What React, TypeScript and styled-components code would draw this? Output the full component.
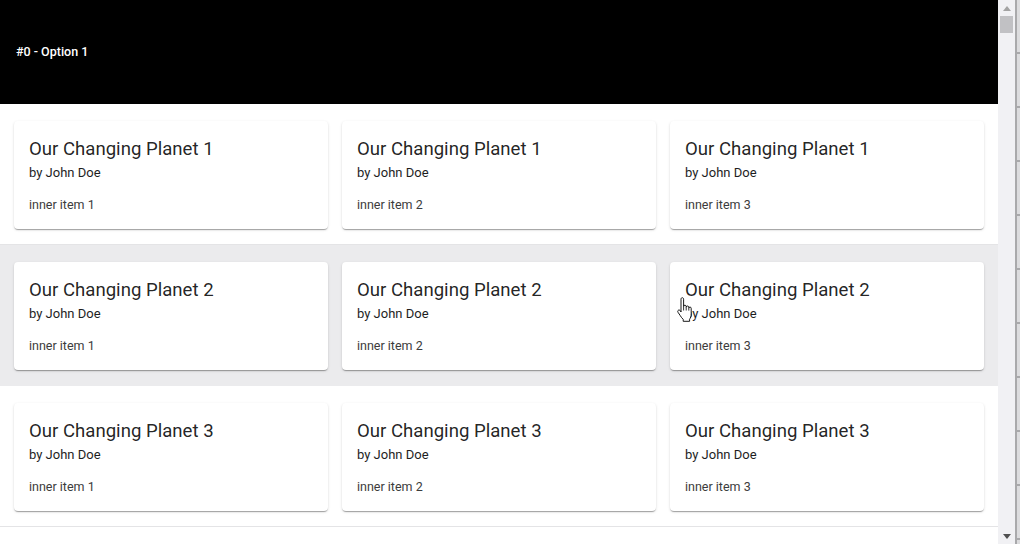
import React from "react";
import styled, { createGlobalStyle } from "styled-components";

const Global = createGlobalStyle`
  html, body { margin: 0; padding: 0; width: 1020px; height: 544px; overflow: hidden; background: #fff; }
  body { font-family: Roboto, "Noto Sans", "Liberation Sans", sans-serif; }
  * { box-sizing: border-box; }
`;

const Frame = styled.div`
  display: flex;
  width: 1020px;
  height: 544px;
  overflow: hidden;
`;

const Main = styled.div`
  position: relative;
  width: 998px;
  height: 544px;
  overflow: hidden;
  display: flex;
  flex-direction: column;
  flex: none;
`;

const Header = styled.div`
  height: 104px;
  background: #000;
  color: #fff;
  display: flex;
  align-items: center;
  padding-left: 16px;
  padding-bottom: 2px;
  font-size: 12.5px;
  font-weight: 500;
  flex: none;
`;

const Row = styled.div<{ $hover?: boolean }>`
  display: grid;
  grid-template-columns: repeat(3, 314px);
  column-gap: 14px;
  padding: 17px 14px 15px;
  background: ${(p) => (p.$hover ? "#ebebed" : "#fff")};
  border-bottom: 1px solid ${(p) => (p.$hover ? "#ebebed" : "#e4e4e6")};
  flex: none;
`;

const Card = styled.div`
  height: 108px;
  background: #fff;
  border-radius: 4px;
  padding: 17px 15px 0;
  box-shadow: 0 2px 1px -1px rgba(0, 0, 0, 0.2), 0 1px 1px 0 rgba(0, 0, 0, 0.14), 0 1px 3px 0 rgba(0, 0, 0, 0.12);
  display: flex;
  flex-direction: column;
`;

const Title = styled.div`
  font-size: 18.6px;
  line-height: 22px;
  color: rgba(0, 0, 0, 0.87);
`;

const Author = styled.div`
  margin-top: 3px;
  font-size: 13px;
  line-height: 20px;
  color: #1e1e1e;
`;

const Inner = styled.div`
  margin-top: 13px;
  font-size: 12.5px;
  line-height: 18px;
  color: #3c3c3c;
`;

const ScrollTrack = styled.div`
  width: 17px;
  height: 544px;
  background: #f1f1f4;
  display: flex;
  flex-direction: column;
  align-items: center;
  flex: none;
`;

const ArrowBtn = styled.div`
  height: 16px;
  width: 17px;
  display: flex;
  align-items: center;
  justify-content: center;
`;

const Thumb = styled.div`
  width: 13px;
  height: 17px;
  background: #c1c1c4;
`;

const Spacer = styled.div`
  flex: 1;
`;

const Edge = styled.div`
  width: 5px;
  height: 544px;
  flex: none;
  border-left: 2px solid #a9a9ab;
  background: repeating-linear-gradient(
    to bottom,
    #dcdcde 0px,
    #dcdcde 52px,
    #a9a9ab 52px,
    #a9a9ab 54px
  );
`;

const Cursor = styled.svg`
  position: absolute;
  left: 676px;
  top: 297px;
  pointer-events: none;
`;

const rows = [1, 2, 3];

export default function App() {
  return (
    <>
      <Global />
      <Frame>
        <Main>
          <Header>#0 - Option 1</Header>
          {rows.map((r) => (
            <Row key={r} $hover={r === 2}>
              {[1, 2, 3].map((i) => (
                <Card key={i}>
                  <Title>Our Changing Planet {r}</Title>
                  <Author>by John Doe</Author>
                  <Inner>inner item {i}</Inner>
                </Card>
              ))}
            </Row>
          ))}
          <Row />
          <Cursor width="18" height="26" viewBox="0 0 18 26">
            <path
              d="M5 2.2c0-.9.6-1.5 1.3-1.5s1.3.6 1.3 1.5v7.3c0-.8.6-1.3 1.3-1.3s1.3.5 1.3 1.3v.8c0-.8.6-1.3 1.3-1.3s1.3.5 1.3 1.3v.9c0-.8.6-1.2 1.2-1.2s1.2.5 1.2 1.3v5.5c0 2.6-.7 4.2-1.6 5.4v2.1H7.2v-2c-1.2-1-2-2.2-2.9-3.6L2 15.3c-.5-.8-.3-1.7.4-2.1.7-.4 1.5-.1 2 .6L5 15V2.2z"
              fill="#fff"
              stroke="#000"
              strokeWidth="0.9"
              strokeLinejoin="round"
            />
            <path d="M7.6 9.5v4M10.2 10.3v3.2M12.8 11.2v2.4" stroke="#000" strokeWidth="0.8" />
          </Cursor>
        </Main>
        <ScrollTrack>
          <ArrowBtn>
            <svg width="8" height="5" viewBox="0 0 8 5">
              <path d="M0 5 L4 0 L8 5 Z" fill="#a3a3a3" />
            </svg>
          </ArrowBtn>
          <Thumb />
          <Spacer />
          <ArrowBtn>
            <svg width="8" height="5" viewBox="0 0 8 5">
              <path d="M0 0 L8 0 L4 5 Z" fill="#505050" />
            </svg>
          </ArrowBtn>
        </ScrollTrack>
        <Edge />
      </Frame>
    </>
  );
}
